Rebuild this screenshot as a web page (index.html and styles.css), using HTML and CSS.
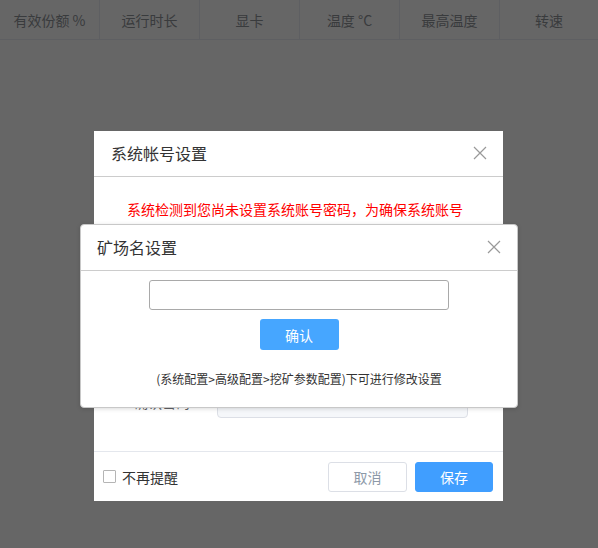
FILE: index.html
```html
<!DOCTYPE html>
<html lang="zh">
<head>
<meta charset="utf-8">
<link rel="stylesheet" href="styles.css">
</head>
<body>
<div class="page">
  <div class="thead">
    <div class="th">有效份额 %</div>
    <div class="th">运行时长</div>
    <div class="th">显卡</div>
    <div class="th">温度 °C</div>
    <div class="th">最高温度</div>
    <div class="th last">转速</div>
  </div>
</div>
<div class="mask"></div>

<div class="dialog dlg-account">
  <div class="dlg-header">
    <span class="dlg-title">系统帐号设置</span>
    <svg class="close" width="14" height="14" viewBox="0 0 14 14"><path d="M1 1L13 13M13 1L1 13" stroke="#999" stroke-width="1.2" fill="none"/></svg>
  </div>
  <div class="dlg-body">
    <p class="warn">系统检测到您尚未设置系统账号密码，为确保系统账号</p>
    <div class="form-row"><div class="inp"></div></div>
    <div class="form-row"><div class="inp"></div></div>
    <div class="form-row"><label class="lbl">确认密码</label><div class="inp"></div></div>
  </div>
  <div class="dlg-footer">
    <label class="check"><span class="box"></span>不再提醒</label>
    <div class="btns">
      <button class="btn btn-cancel">取消</button>
      <button class="btn btn-save">保存</button>
    </div>
  </div>
</div>

<div class="dialog dlg-farm">
  <div class="dlg-header farm-header">
    <span class="dlg-title">矿场名设置</span>
    <svg class="close" width="14" height="14" viewBox="0 0 14 14"><path d="M1 1L13 13M13 1L1 13" stroke="#999" stroke-width="1.2" fill="none"/></svg>
  </div>
  <div class="farm-body">
    <div class="farm-input"></div>
    <button class="btn-confirm">确认</button>
    <p class="hint">(系统配置&gt;高级配置&gt;挖矿参数配置)下可进行修改设置</p>
  </div>
</div>
</body>
</html>
```

FILE: styles.css
```css
* { box-sizing: border-box; }
html, body { margin: 0; padding: 0; }
body {
  width: 598px;
  height: 548px;
  overflow: hidden;
  background: #fff;
  font-family: "Noto Sans CJK SC", "Noto Sans", sans-serif;
  color: #333;
  position: relative;
}
.page { width: 598px; }
.thead {
  display: flex;
  height: 40px;
  border-bottom: 1px solid #ebeef5;
  background: #fff;
}
.th {
  width: 100px;
  flex: none;
  display: flex;
  align-items: center;
  justify-content: center;
  font-size: 14px;
  color: #909399;
  border-right: 1px solid #ebeef5;
}
.th.last { width: 98px; border-right: none; }
.mask {
  position: absolute;
  inset: 0;
  background: rgba(0, 0, 0, 0.6);
}
.dialog {
  position: absolute;
  background: #fff;
}
.dlg-account {
  left: 94px;
  top: 131px;
  width: 409px;
  height: 370px;
  display: flex;
  flex-direction: column;
}
.dlg-header {
  height: 46px;
  flex: none;
  display: flex;
  align-items: center;
  justify-content: space-between;
  padding: 0 16px 2px 17px;
  border-bottom: 1px solid #ccc;
}
.dlg-title { font-size: 16px; color: #333; }
.close { display: block; }
.dlg-body {
  height: 274px;
  flex: none;
  overflow: hidden;
  padding: 20px 0 0 0;
}
.warn {
  margin: 0 34px 0 27px;
  font-size: 14px;
  line-height: 24px;
  color: #f00;
  text-align: center;
}
.form-row {
  display: flex;
  align-items: center;
  justify-content: flex-end;
  gap: 27px;
  height: 32px;
  margin-top: 16px;
  padding-right: 35px;
}
.form-row:nth-of-type(1) { margin-top: 69px; }
.lbl {
  width: 96px;
  text-align: right;
  font-size: 14px;
  color: #606266;
}
.inp {
  width: 251px;
  height: 32px;
  border: 1px solid #dcdfe6;
  border-radius: 4px;
  background: #f5f7fa;
}
.dlg-footer {
  flex: 1;
  display: flex;
  align-items: center;
  justify-content: space-between;
  padding: 0 10px 0 9px;
  border-top: 1px solid #e4e7ed;
}
.check {
  display: flex;
  align-items: center;
  gap: 6px;
  font-size: 14px;
  color: #333;
}
.box {
  width: 13px;
  height: 13px;
  border: 1px solid #b5b5b5;
  border-radius: 1px;
  background: #fff;
}
.btns { display: flex; gap: 8px; }
.btn {
  height: 30px;
  border-radius: 3px;
  font-family: inherit;
  font-size: 14px;
  padding: 0;
}
.btn-cancel {
  width: 79px;
  background: #fff;
  border: 1px solid #dcdfe6;
  color: #8d99a8;
}
.btn-save {
  width: 78px;
  background: #409eff;
  border: 1px solid #409eff;
  color: #fff;
}
.dlg-farm {
  left: 80px;
  top: 224px;
  width: 438px;
  height: 184px;
  border: 1px solid #c8c8c8;
  border-radius: 4px;
  box-shadow: 0 1px 4px rgba(0,0,0,0.15);
}
.farm-header {
  height: 46px;
  padding: 0 16px 2px 16px;
  border-bottom: 1px solid #ccc;
}
.farm-body {
  display: flex;
  flex-direction: column;
  align-items: center;
  padding-top: 9px;
}
.farm-input {
  width: 300px;
  height: 30px;
  border: 1px solid #a9a9a9;
  border-radius: 3px;
}
.btn-confirm {
  margin-top: 9px;
  width: 79px;
  height: 31px;
  border: none;
  border-radius: 3px;
  background: #46a6ff;
  color: #fff;
  font-family: inherit;
  font-size: 14px;
  padding: 0;
}
.hint {
  margin: 20px 0 0 0;
  font-size: 12px;
  line-height: 18px;
  color: #333;
}
```
